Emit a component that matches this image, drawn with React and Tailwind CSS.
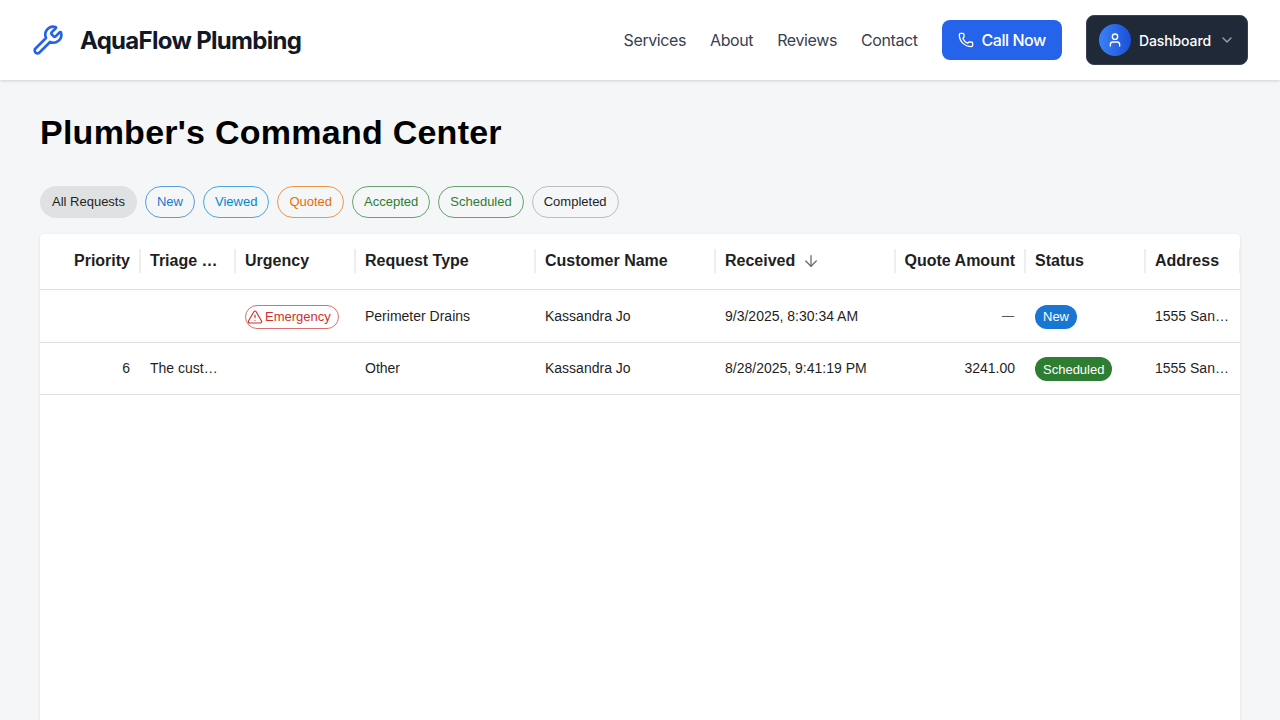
import React from 'react';
import { Wrench, Phone, User, ChevronDown, ArrowDown, TriangleAlert } from 'lucide-react';

const filters = [
  { label: 'All Requests', cls: 'bg-[#e0e1e3] border-transparent text-[#1f1f1f]' },
  { label: 'New', cls: 'border-[#1976d2]/70 text-[#1976d2]' },
  { label: 'Viewed', cls: 'border-[#0288d1]/70 text-[#0288d1]' },
  { label: 'Quoted', cls: 'border-[#ed6c02]/70 text-[#ed6c02]' },
  { label: 'Accepted', cls: 'border-[#2e7d32]/70 text-[#2e7d32]' },
  { label: 'Scheduled', cls: 'border-[#2e7d32]/70 text-[#2e7d32]' },
  { label: 'Completed', cls: 'border-[#bdbdbd] text-[#1f1f1f]' },
];

const columns = [
  { label: 'Priority', width: 'w-[100px]', right: true },
  { label: 'Triage …', width: 'w-[95px]' },
  { label: 'Urgency', width: 'w-[120px]' },
  { label: 'Request Type', width: 'w-[180px]' },
  { label: 'Customer Name', width: 'w-[180px]' },
  { label: 'Received', width: 'w-[180px]', sorted: true },
  { label: 'Quote Amount', width: 'w-[130px]', right: true },
  { label: 'Status', width: 'w-[120px]' },
  { label: 'Address', width: 'w-[95px]' },
];

function Chip({ children, color }) {
  return (
    <span className={`mt-0.5 inline-flex h-6 items-center rounded-full px-2 pt-0.5 text-[13px] text-white ${color}`}>
      {children}
    </span>
  );
}

function Cell({ width, right, children }) {
  return (
    <div className={`${width} flex shrink-0 items-center px-[10px] overflow-hidden ${right ? 'justify-end' : ''}`}>
      {children}
    </div>
  );
}

function Row({ cells }) {
  return (
    <div className="flex h-[52.5px] border-b border-[#e0e0e0] text-sm text-[#1f1f1f]">
      {columns.map((col, i) => (
        <Cell key={col.label} width={col.width} right={col.right}>
          {cells[i]}
        </Cell>
      ))}
    </div>
  );
}

export default function App() {
  return (
    <div className="h-screen overflow-hidden bg-[#f4f6f8] font-['Liberation_Sans',sans-serif]">
      <header className="flex h-20 items-center justify-between bg-white pl-8 pr-8 shadow-[0_1px_3px_rgba(0,0,0,0.15)] font-['Inter',sans-serif] relative z-10">
        <div className="flex items-center gap-4">
          <Wrench className="h-8 w-8 text-[#2563eb]" strokeWidth={2} />
          <span className="mt-0.5 text-2xl font-bold tracking-[-0.7px] text-[#111827]">AquaFlow Plumbing</span>
        </div>
        <nav className="flex items-center gap-6 text-base tracking-[-0.4px] text-[#374151]">
          <a>Services</a>
          <a>About</a>
          <a>Reviews</a>
          <a>Contact</a>
          <button className="flex h-10 items-center gap-2 rounded-lg bg-[#2563eb] px-4 font-medium tracking-[-0.45px] text-white">
            <Phone className="h-4 w-4" />
            Call Now
          </button>
          <button className="flex h-[50px] items-center rounded-lg border border-[#374151] bg-[#1f2937] px-3 tracking-normal text-white">
            <span className="flex h-8 w-8 items-center justify-center rounded-full bg-gradient-to-r from-[#3b82f6] to-[#1d4ed8]">
              <User className="h-4 w-4" />
            </span>
            <span className="ml-2 mt-0.5 text-sm font-medium tracking-[-0.1px]">Dashboard</span>
            <ChevronDown className="ml-2 h-4 w-4 text-[#9ca3af]" />
          </button>
        </nav>
      </header>

      <main className="px-10 pt-[31px]">
        <h1 className="text-[34px] font-bold leading-[42px] tracking-[0.25px] text-black">Plumber's Command Center</h1>

        <div className="mt-[33px] flex gap-2">
          {filters.map((f) => (
            <span key={f.label} className={`flex h-8 items-center rounded-full border px-[11px] text-[13px] ${f.cls}`}>
              {f.label}
            </span>
          ))}
        </div>

        <div className="mt-4 h-[600px] overflow-hidden rounded bg-white shadow-[0_1px_3px_rgba(0,0,0,0.12)]">
          <div className="flex h-[56px] border-b border-[#e0e0e0] pb-0.5 text-base font-bold text-[#1f1f1f]">
            {columns.map((col) => (
              <div key={col.label} className={`${col.width} relative flex shrink-0 items-center px-[10px] ${col.right ? 'justify-end' : ''}`}>
                <span className="whitespace-nowrap">{col.label}</span>
                {col.sorted && <ArrowDown className="ml-[7px] h-[18px] w-[18px] text-[#6b6b6b]" strokeWidth={1.75} />}
                <span className="absolute -right-px top-[15px] h-6 w-0.5 bg-[#eeeeee]" />
              </div>
            ))}
          </div>
          <Row
            cells={[
              '',
              '',
              <span className="mt-0.5 inline-flex h-6 items-center gap-0.5 rounded-full border border-[#d32f2f]/70 pl-px pr-[7px] text-[13px] text-[#d32f2f]">
                <TriangleAlert className="h-4 w-4" strokeWidth={1.75} />
                <span className="pt-0.5">Emergency</span>
              </span>,
              'Perimeter Drains',
              'Kassandra Jo',
              '9/3/2025, 8:30:34 AM',
              <span className="pr-px text-xs text-[#555555]">—</span>,
              <Chip color="bg-[#1976d2]">New</Chip>,
              <span className="truncate">1555 San…</span>,
            ]}
          />
          <Row
            cells={[
              '6',
              <span className="truncate">The cust…</span>,
              '',
              'Other',
              'Kassandra Jo',
              '8/28/2025, 9:41:19 PM',
              '3241.00',
              <Chip color="bg-[#2e7d32]">Scheduled</Chip>,
              <span className="truncate">1555 San…</span>,
            ]}
          />
        </div>
      </main>
    </div>
  );
}
